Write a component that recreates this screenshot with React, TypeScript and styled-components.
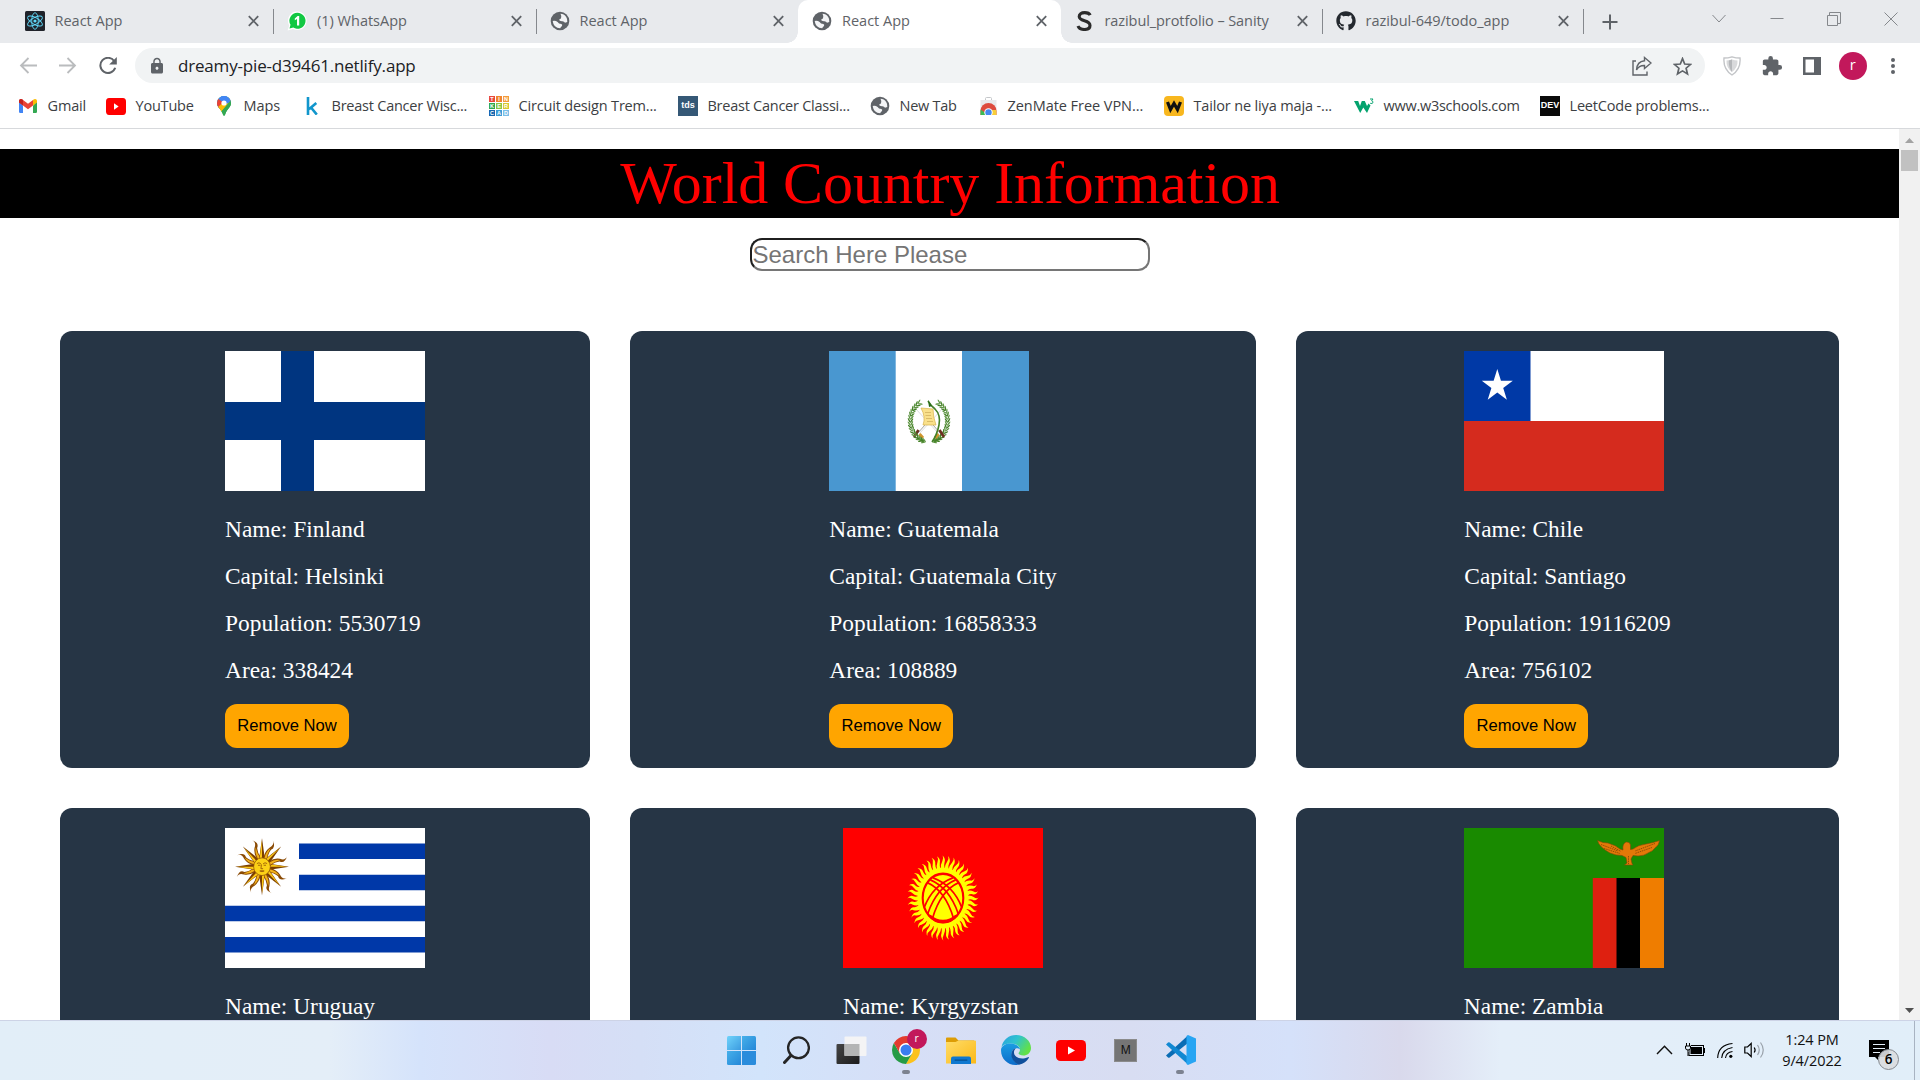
import React from 'react';
import styled, { createGlobalStyle } from 'styled-components';
import { FaGithub } from 'react-icons/fa';
import { MdExtension, MdLock } from 'react-icons/md';

const UI = '"Open Sans", "Noto Sans", sans-serif';
const SERIF = '"Liberation Serif", "Times New Roman", serif';
const SANS = '"Liberation Sans", Arial, sans-serif';

const GlobalStyle = createGlobalStyle`
  * { box-sizing: border-box; }
  body { margin: 0; background: #fff; overflow: hidden; }
  svg { display: block; flex: none; }
`;

const Screen = styled.div`
  width: 1920px;
  height: 1080px;
  display: flex;
  flex-direction: column;
  overflow: hidden;
  background: #fff;
`;

/* ---------- tab strip ---------- */

const TabStrip = styled.div`
  height: 43px;
  display: flex;
  background: #e8eaed;
  padding-left: 10.5px;
`;

const Tab = styled.div<{ $active?: boolean; $line?: boolean; $w?: number }>`
  position: relative;
  width: ${p => p.$w ?? 262.5}px;
  height: 43px;
  padding: 0 14px 2px 14px;
  display: flex;
  align-items: center;
  gap: 10px;
  color: #5f6368;
  background: ${p => (p.$active ? '#fff' : 'transparent')};
  border-radius: 10px 10px 0 0;
  &::after {
    content: '';
    position: absolute;
    right: -1px;
    top: 9px;
    width: 1px;
    height: 25px;
    background: ${p => (p.$line ? '#85888d' : 'transparent')};
  }
`;

const TabCurve = styled.div<{ $side: 'left' | 'right' }>`
  position: absolute;
  bottom: 0;
  ${p => p.$side}: -11px;
  width: 11px;
  height: 11px;
  background: radial-gradient(circle at ${p => (p.$side === 'left' ? '0 0' : '100% 0')}, transparent 10.5px, #fff 11px);
`;

const TabIcon = styled.div`
  width: 20px;
  height: 22px;
  display: flex;
  align-items: center;
  justify-content: center;
`;

const TabTitle = styled.span<{ $ls?: number }>`
  flex: 1;
  white-space: nowrap;
  font: 14.5px/20px ${UI};
  letter-spacing: ${p => p.$ls ?? 0}px;
`;

const NewTab = styled.div`
  width: 54px;
  display: flex;
  align-items: center;
  justify-content: center;
`;

const WindowButtons = styled.div`
  margin-left: auto;
  display: flex;
  height: 37px;
  align-items: center;
`;

const WindowButton = styled.div`
  width: 57.3px;
  display: flex;
  justify-content: center;
`;

/* ---------- toolbar ---------- */

const Toolbar = styled.div`
  height: 45px;
  padding: 5px 0 5px 15px;
  display: flex;
  align-items: center;
  background: #fff;
`;

const NavButton = styled.div`
  width: 40px;
  height: 35px;
  display: flex;
  align-items: center;
  justify-content: flex-start;
  padding-left: 4px;
`;

const Omnibox = styled.div`
  width: 1570px;
  flex: none;
  height: 35px;
  border-radius: 18px;
  background: #f1f3f4;
  display: flex;
  align-items: center;
  padding: 1px 13px 0 13px;
`;

const Url = styled.span`
  flex: 1;
  margin-left: 12px;
  font: 17px/24px ${UI};
  letter-spacing: -0.18px;
  color: #202124;
`;

const OmniAction = styled.div`
  width: 40px;
  display: flex;
  justify-content: flex-end;
`;

const Extensions = styled.div`
  display: flex;
  margin-left: 7px;
  align-items: center;
`;

const Extension = styled.div`
  width: 40.2px;
  display: flex;
  justify-content: center;
`;

const Avatar = styled.div<{ $size: number }>`
  width: ${p => p.$size}px;
  height: ${p => p.$size}px;
  border-radius: 50%;
  background: #c2185b;
  color: #fff;
  font: ${p => p.$size / 1.9}px/1 ${UI};
  display: flex;
  align-items: center;
  justify-content: center;
  padding-bottom: 2px;
`;

/* ---------- bookmarks ---------- */

const Bookmarks = styled.div`
  height: 41px;
  padding: 0 0 4px 18px;
  display: flex;
  align-items: center;
  border-bottom: 1px solid #d7d9dc;
`;

const Bookmark = styled.div<{ $w: number; $ls: number }>`
  width: ${p => p.$w}px;
  display: flex;
  align-items: center;
  gap: 9.5px;
  font: 14.5px/20px ${UI};
  letter-spacing: ${p => p.$ls - 0.05}px;
  color: #3c4043;
  white-space: nowrap;
`;

const BookmarkIcon = styled.div`
  width: 20px;
  height: 20px;
  flex: none;
  display: flex;
  align-items: center;
  justify-content: center;
`;

const TinyTile = styled.div<{ $bg: string; $size: number }>`
  width: 20px;
  height: 20px;
  background: ${p => p.$bg};
  color: #fff;
  font: bold ${p => p.$size}px/19px ${SANS};
  letter-spacing: 0;
  text-align: center;
`;

const TileGrid = styled.div`
  width: 20px;
  height: 20px;
  display: grid;
  grid-template-columns: repeat(3, 6px);
  grid-auto-rows: 6px;
  gap: 1px;
`;

const TileCell = styled.span<{ $bg: string }>`
  background: ${p => p.$bg};
  color: #fff;
  font: bold 5.5px/6px ${SANS};
  letter-spacing: 0;
  text-align: center;
`;

/* ---------- page ---------- */

const Viewport = styled.div`
  height: 891px;
  display: flex;
  overflow: hidden;
`;

const Page = styled.main`
  width: 1899px;
  padding-top: 20px;
`;

const Banner = styled.h1`
  margin: 0;
  height: 69px;
  padding-left: 1px;
  background: #000;
  color: #f00;
  font: 400 60px/69px ${SERIF};
  letter-spacing: -0.08px;
  text-align: center;
`;

const SearchRow = styled.div`
  display: flex;
  justify-content: center;
  padding: 20px 0 60px;
`;

const SearchInput = styled.input`
  width: 400px;
  height: 33px;
  padding: 0 1px;
  border: 2px solid;
  border-color: #1f1f1f #767676 #767676 #1f1f1f;
  border-radius: 12px;
  background: #fff;
  font: 24px ${SANS};
  outline: none;
  &::placeholder { color: #757575; opacity: 1; }
`;

const CardGrid = styled.div`
  display: grid;
  grid-template-columns: 530px 626px 543px;
  gap: 40px;
  padding-left: 60px;
`;

const Card = styled.article`
  height: 437px;
  padding: 20px;
  display: flex;
  justify-content: center;
  border-radius: 12px;
  background: #263545;
`;

const CardBody = styled.div`
  min-width: 200px;
`;

const CardLine = styled.p`
  margin: 0 0 20px;
  font: 23.4px/27px ${SERIF};
  color: #fff;
`;

const Flag = styled.svg`
  width: 200px;
  height: 140px;
  margin-bottom: 25px;
`;

const RemoveButton = styled.button`
  display: block;
  height: 44px;
  width: 124px;
  padding: 0;
  border: 0;
  border-radius: 12px;
  background: orange;
  color: #000;
  font: 16.6px ${SANS};
`;

const Scrollbar = styled.div`
  width: 21px;
  display: flex;
  flex-direction: column;
  align-items: center;
  background: #f1f1f1;
  padding: 9px 0 7px;
`;

const Thumb = styled.div`
  width: 17px;
  height: 21px;
  margin: 7px 0 auto;
  background: #c1c1c1;
`;

/* ---------- taskbar ---------- */

const Taskbar = styled.footer`
  height: 60px;
  display: flex;
  border-top: 1px solid #cdd3e6;
  background: linear-gradient(90deg, #e2eef8 0, #e4eef8 330px, #d5e3fb 420px, #d8dcf5 550px, #d5dff6 640px, #d2e4fb 760px, #d6dff7 900px, #d8ddf2 1130px, #d5e1fa 1290px, #d9d9ec 1400px, #e4eef9 1500px, #e1eef9 1920px);
`;

const Apps = styled.div`
  margin-left: 714px;
  display: flex;
`;

const TaskButton = styled.div<{ $open?: boolean }>`
  position: relative;
  width: 54.9px;
  height: 58px;
  display: flex;
  align-items: center;
  justify-content: center;
  &::after {
    content: '';
    position: absolute;
    left: 23px;
    top: 49px;
    width: 8px;
    height: 4px;
    border-radius: 2px;
    background: ${p => (p.$open ? '#7c8290' : 'transparent')};
  }
`;

const AppBadge = styled.div`
  position: absolute;
  left: 28px;
  top: 8px;
`;

const MTile = styled.div`
  width: 23px;
  height: 23px;
  background: #757575;
  border: 1px solid #8b8b8b;
  color: #111;
  font: 12px/21px ${SANS};
  text-align: center;
`;

const Tray = styled.div`
  margin-left: auto;
  padding: 0 5px 1px 0;
  display: flex;
  align-items: center;
`;

const TrayIcon = styled.div<{ $w: number }>`
  width: ${p => p.$w}px;
  display: flex;
  justify-content: center;
`;

const Clock = styled.div`
  width: 88px;
  margin-right: 2px;
  font: 14.5px/21.5px ${UI};
  color: #111;
  text-align: center;
  letter-spacing: -0.1px;
`;

const Notice = styled.div`
  position: relative;
  width: 57px;
  display: flex;
  justify-content: flex-start;
  padding-left: 11px;
  height: 59px;
  align-items: center;
  border-right: 1px solid #a8b3c2;
`;

const NoticeCount = styled.span`
  position: absolute;
  left: 20px;
  top: 28px;
  width: 21px;
  height: 21px;
  border: 1px solid #85898f;
  border-radius: 50%;
  background: rgba(218, 220, 224, 0.92);
  font: 600 13.5px/18px ${UI};
  text-align: center;
`;

/* ---------- icons ---------- */

const Globe = () => (
  <svg width="20" height="22" viewBox="0 0 20 22">
    <circle cx="10" cy="11" r="9.3" fill="#5f6368" />
    <path d="M10.5 3.800Q14 3.800 16.200 7Q17.600 9.200 17.300 12L15 12.800Q14 11 12 11.300Q9.200 11.300 9.300 9.600Q9.600 8.600 11 8.400Q12 6.500 10.500 3.800z" fill="#f3f4f6" />
    <path d="M2.700 11Q5.500 10.400 7.600 12Q8.600 14 11.300 14Q12.800 14.300 12 16Q10.800 17 10.200 18.300Q3.600 18.200 2.700 11z" fill="#f3f4f6" />
  </svg>
);

const Close = () => (
  <svg width="11" height="12" viewBox="0 0 11 12"><path d="M.8 1.2l9.400 9.600M10.200 1.200L.8 10.800" stroke="#5f6368" strokeWidth="1.8" /></svg>
);

const ReactMark = () => (
  <svg width="20" height="20" viewBox="-10 -10 20 20">
    <rect x="-10" y="-10" width="20" height="20" rx="1.5" fill="#20232a" />
    {[0, 60, 120].map(a => <ellipse key={a} rx="8.3" ry="3.3" fill="none" stroke="#61dafb" strokeWidth=".9" transform={`rotate(${a + 30})`} />)}
    <circle r="1.6" fill="#61dafb" />
  </svg>
);

const WhatsMark = () => (
  <svg width="20" height="20" viewBox="0 0 20 20">
    <path d="M10.5.6a9.2 9.2 0 1 1-4.4 17.3L.6 19.4l1.6-5A9.2 9.2 0 0 1 10.5.6z" fill="#fff" />
    <path d="M10.5 1.8a8 8 0 1 1-4.2 14.8L2.5 17.6l1-3.8a8 8 0 0 1 7-12z" fill="#12c843" />
    <path d="M7.8 7.4L10.6 5h1.6v9.4H10V8L7.8 9.3z" fill="#fff" />
  </svg>
);

const SanityMark = () => (
  <svg width="17" height="20" viewBox="0 0 17 20">
    <path d="M14.2 4.2C13.4 2.5 11.500 1.600 8.700 1.600C5.300 1.600 3.200 3.300 3.200 5.600C3.200 8 5.400 8.900 8.500 9.800C12 10.800 14 12 14 14.500C14 16.900 11.800 18.500 8.400 18.500C5 18.500 2.800 17.200 2 15" fill="none" stroke="#2b2b2b" strokeWidth="3.1" />
  </svg>
);

const GmailMark = () => (
  <svg width="18" height="14" viewBox="0 0 18 14">
    <path d="M0 2.500V12.800Q0 14 1.200 14H4V6.500z" fill="#4285f4" />
    <path d="M18 2.500V12.800Q18 14 16.800 14H14V6.500z" fill="#34a853" />
    <path d="M0 2C0 .2 2-.600 3.400.500L9 4.800L14 1V6.500L9 10.300L4 6.500L0 3.500z" fill="#ea4335" />
    <path d="M0 2C0 .2 2-.600 3.400.500L4 1V6.500L0 3.500z" fill="#c5221f" />
    <path d="M14 1L14.600.500C16-.600 18 .2 18 2V3.500L14 6.500z" fill="#fbbc04" />
  </svg>
);

const YouTubeMark = ({ w, h }: { w: number; h: number }) => (
  <svg width={w} height={h} viewBox="0 0 30 21" preserveAspectRatio="none">
    <rect width="30" height="21" rx="4.500" fill="#f00" />
    <path d="M12 6.500L19 10.500L12 14.500z" fill="#fff" />
  </svg>
);

const MapsMark = () => (
  <svg width="14" height="20" viewBox="0 0 14 20">
    <clipPath id="pin"><path d="M7 0a7 7 0 0 1 7 7c0 4-3.500 5.500-5.500 10.500C8 19 7.600 20 7 20s-1-1-1.500-2.500C3.500 12.500 0 11 0 7a7 7 0 0 1 7-7z" /></clipPath>
    <g clipPath="url(#pin)">
      <rect width="14" height="20" fill="#34a853" />
      <path d="M0 0H14V4L7 10L0 14z" fill="#4285f4" />
      <path d="M0 2L7 7L0 14z" fill="#ea4335" />
      <path d="M0 12L12 1L14 5L4 16z" fill="#fbbc04" />
      <path d="M4 0H14L14 6L9 8L4 4z" fill="#4285f4" />
      <path d="M14 4L4 16L8 20H14z" fill="#34a853" />
    </g>
    <circle cx="7" cy="7" r="2.600" fill="#fff" />
  </svg>
);

const KMark = () => (
  <svg width="12" height="18" viewBox="0 0 12 18"><path d="M2 0V18M10.300 6L3 12.200M5 10.500L10.800 17.600" fill="none" stroke="#1196cc" strokeWidth="2.600" /></svg>
);

const StoreMark = () => (
  <svg width="17" height="18" viewBox="0 0 17 18">
    <path d="M5.500 3V1.500Q5.500.500 6.500.500H10.500Q11.500.500 11.500 1.500V3" fill="none" stroke="#c5c7ca" />
    <path d="M.500 3H16.500V18H.500z" fill="#e8e9eb" />
    <path d="M.500 18V14a8 8 0 0 1 16 0V18z" fill="#dd4b3e" />
    <path d="M.500 18V12.500L5.500 16V18z" fill="#3cba54" />
    <path d="M10.500 13H16.300L16.500 18H10z" fill="#f7ce3a" />
    <circle cx="8.500" cy="15.500" r="4.200" fill="#fff" /><circle cx="8.500" cy="15.500" r="3.200" fill="#4688f1" />
  </svg>
);

const WMark = () => (
  <svg width="20" height="20" viewBox="0 0 20 20">
    <rect width="20" height="20" rx="4" fill="#f8b71e" />
    <path d="M3.500 6L6.500 13.500L10 7.500L13.500 13.500L16.500 6" fill="none" stroke="#111" strokeWidth="3.200" />
  </svg>
);

const W3Mark = () => (
  <svg width="20" height="16" viewBox="0 0 20 16">
    <path d="M0 3H4.200L6 8L7.800 3H10.800L13 8L14.500 5.500L16.500 7.500L13 15L9.300 9.500L6.200 15z" fill="#04a36e" />
    <path d="M16 1H19L17.600 2.800Q19.300 3.200 19 4.600Q18.300 6 16.200 5.300" fill="none" stroke="#04a36e" strokeWidth="1" />
  </svg>
);

const ShareIcon = () => (
  <svg width="20" height="20" viewBox="0 0 20 20" fill="none" stroke="#5f6368" strokeWidth="1.400">
    <path d="M4 5H1V19H15V15.500" />
    <path d="M12.500 1.500L19 7L12.500 12.500V9.500Q7 9.300 4.500 14Q5 5.500 12.500 4.800z" />
  </svg>
);

const StarIcon = () => (
  <svg width="19" height="19" viewBox="0 0 19 19"><path d="M9.500 1.600L11.700 7L17.600 7.400L13.100 11.200L14.500 17L9.500 13.900L4.500 17L5.900 11.200L1.400 7.400L7.300 7z" fill="none" stroke="#5f6368" strokeWidth="1.700" /></svg>
);

const ShieldIcon = () => (
  <svg width="18" height="20" viewBox="0 0 18 20">
    <path d="M9 .800Q13 2 17 2Q18 13 9 19Q0 13 1 2Q5 2 9 .800z" fill="#fff" stroke="#c3c5c8" strokeWidth="1.400" />
    <path d="M9 3.500Q12 4.500 14.500 4.500Q15 11.500 9 16Q3 11.500 3.500 4.500Q6 4.500 9 3.500z" fill="#d8d9db" />
    <path d="M9 3.500V16Q5.500 12 5.800 4.600" fill="#b5b7ba" />
  </svg>
);

const WindowsMark = () => (
  <svg width="29" height="29" viewBox="0 0 29 29">
    <linearGradient id="win" x1="0" y1="0" x2="1" y2="1"><stop stopColor="#6fd3fb" /><stop offset="1" stopColor="#3b9be0" /></linearGradient>
    <linearGradient id="win2" x1="0" y1="0" x2="1" y2="1"><stop stopColor="#46b0ea" /><stop offset="1" stopColor="#2487d8" /></linearGradient>
    <path d="M1.500 0H14V14H0V1.500Q0 0 1.500 0z" fill="url(#win)" />
    <path d="M15 0H27.500Q29 0 29 1.500V14H15z" fill="url(#win2)" />
    <path d="M0 15H14V29H1.500Q0 29 0 27.500z" fill="url(#win2)" />
    <path d="M15 15H29V27.500Q29 29 27.500 29H15z" fill="#2a8cdc" />
  </svg>
);

const SearchMark = () => (
  <svg width="27" height="28" viewBox="0 0 27 28" fill="none" stroke="#252525">
    <circle cx="15.500" cy="11.800" r="10.400" strokeWidth="2.300" /><path d="M8 19.500L1.500 26.500" strokeWidth="3" strokeLinecap="round" />
  </svg>
);

const TaskViewMark = () => (
  <svg width="31" height="28" viewBox="0 0 31 28">
    <linearGradient id="tv" x1="0" y1="0" x2="1" y2="1"><stop stopColor="#454545" /><stop offset="1" stopColor="#1c1c1c" /></linearGradient>
    <rect x=".500" y="8" width="23" height="20" rx="1" fill="url(#tv)" />
    <rect x="8.500" y=".500" width="22" height="19.500" rx="1" fill="#f4f4f5" />
    <rect x="8.500" y="8" width="15" height="12" fill="#b4b5b5" />
  </svg>
);

const ChromeMark = () => (
  <svg width="28" height="28" viewBox="-14 -14 28 28">
    <path d="M0-7H12.120A14 14 0 0 1 0 14L6 3.500z" fill="#fcc21b" />
    <path d="M-12.120-7A14 14 0 0 0 0 14L6.060 3.500L0 0L-6.060 3.500z" fill="#259b46" />
    <path d="M-12.120-7A14 14 0 0 1 12.120-7H0L-6.060 3.500z" fill="#e33b2e" />
    <circle r="7" fill="#fff" /><circle r="5.500" fill="#3a7df0" />
  </svg>
);

const FolderMark = () => (
  <svg width="30" height="27" viewBox="0 0 30 27">
    <linearGradient id="fold" x1="0" y1="0" x2="1" y2="1"><stop stopColor="#ffdc68" /><stop offset="1" stopColor="#fbb917" /></linearGradient>
    <path d="M0 1.500Q0 .500 1 .500H9.500L12.500 3.500H28V8H0z" fill="#dd9d05" />
    <path d="M0 5H9.500L12.500 3.500H29Q30 3.500 30 4.500V26.500H0z" fill="url(#fold)" />
    <path d="M5 27V21.500Q5 19.500 7 19.500H23Q25 19.500 25 21.500V27z" fill="#0f78d0" />
    <rect x="8.500" y="22.500" width="13" height="1.200" rx=".600" fill="#064f8e" />
  </svg>
);

const EdgeMark = () => (
  <svg width="30" height="30" viewBox="0 0 30 30">
    <linearGradient id="eg1" x1="0" y1="0" x2="1" y2=".500"><stop stopColor="#2a9fe0" /><stop offset=".5" stopColor="#2fc3cf" /><stop offset="1" stopColor="#62e048" /></linearGradient>
    <linearGradient id="eg2" x1="0" y1="0" x2="0" y2="1"><stop stopColor="#1b9de2" /><stop offset="1" stopColor="#0c6ccb" /></linearGradient>
    <path d="M.500 12C2 4.500 8 0 15 0C23.500 0 30 6 30 13C30 18 26 20.500 22.500 20.500C19.500 20.500 17.500 19.500 17.500 18.300C17.500 17.500 19 17 19 14.500C19 11 14.500 8.500 9.500 8.500C5 8.500 2 10 .500 12z" fill="url(#eg1)" />
    <path d="M.100 14C1 10.500 5 8.500 9.500 8.500C14.500 8.500 18.500 11.200 19 14.500C17 12.500 12.500 12.500 11 16.500C9.500 22 14 28.500 18.500 29.500C8 32 -.800 24 .100 14z" fill="url(#eg2)" />
    <path d="M11.500 15.500C8.500 20 11.500 27.500 18 29.700C22.500 29 26 26 27.800 23C28.200 22.300 27.600 21.800 27 22.200C19.500 25.500 12.500 22 13 17C13.100 15.500 13.800 14.200 15 13.300C13.500 13.500 12.300 14.200 11.500 15.500z" fill="#10509c" />
  </svg>
);

const CodeMark = () => (
  <svg width="30" height="30" viewBox="0 0 30 30">
    <path d="M0 20.500L2 22.500Q2.800 23 3.700 22.400L22 8V.500Z" fill="#0a6cb4" />
    <path d="M0 9.500L2 7.500Q2.800 7 3.700 7.600L22 22V29.500Z" fill="#1188d2" />
    <path d="M22 0L30 3.500V26.500L22 30L20.500 29V1z" fill="#27a5f3" />
  </svg>
);

const ChevronUp = () => <svg width="17" height="10" viewBox="0 0 17 10"><path d="M1 9L8.500 1.200L16 9" fill="none" stroke="#111" strokeWidth="1.400" /></svg>;

const BatteryIcon = () => (
  <svg width="20" height="14" viewBox="0 0 20 14">
    <rect x="4" y="2.500" width="14.500" height="10" fill="none" stroke="#000" /><rect x="5.500" y="4" width="11.500" height="7" /><rect x="18.500" y="5" width="1.500" height="5" />
    <path d="M0 2H6V6H4V9H2V6H0z" fill="#e3eef9" /><path d="M1.500 0V3M4.500 0V3M.500 3H5.500V5Q5.500 7 3 7Q.500 7 .500 5zM3 7V13" fill="none" stroke="#000" />
  </svg>
);

const WifiIcon = () => (
  <svg width="17" height="17" viewBox="0 0 17 17" fill="none" stroke="#000" strokeWidth="1.100">
    <path d="M.700 16Q1 3 15.500 1.500M4.700 16Q5 7.500 15.500 5.500M8.500 16Q9 10.500 15.500 9.500" /><circle cx="13.800" cy="14.300" r="1.600" fill="#000" stroke="none" />
  </svg>
);

const VolumeIcon = () => (
  <svg width="21" height="18" viewBox="0 0 21 18" fill="none" stroke="#000" strokeWidth="1.200">
    <path d="M.800 6H3.500L7.200 2.500V15.500L3.500 12H.800z" /><path d="M10.200 6.500Q12 9 10.200 11.500" />
    <path d="M13.500 4Q17 9 13.500 14M16.500 1.500Q22 9 16.500 16.500" stroke="#9aa2ab" />
  </svg>
);

const NoticeIcon = () => (
  <svg width="20" height="20" viewBox="0 0 20 20">
    <path d="M0 0H20V17H9V20L6 17H0z" fill="#000" /><path d="M4 4.500H16M4 8.500H16M4 12.500H11" stroke="#e3eef9" strokeWidth="1.200" />
  </svg>
);

/* ---------- flags ---------- */

const polar = (r: number, a: number) => `${(r * Math.cos(a)).toFixed(3)} ${(r * Math.sin(a)).toFixed(3)}`;

const Finland = () => (
  <Flag viewBox="0 0 200 140"><path d="M0 0H200V140H0z" fill="#fff" /><path d="M56 0H89V140H56zM0 51H200V89H0z" fill="#003580" /></Flag>
);

const leaves = Array.from({ length: 17 }, (_, i) => -1.08 + i * 0.145);

const Guatemala = () => (
  <Flag viewBox="0 0 200 140">
    <path d="M0 0H200V140H0z" fill="#4997d0" /><path d="M66.700 0H133V140H66.700z" fill="#fff" />
    {[1, -1].map(side => (
      <g key={side} transform={`translate(100 70) scale(${side} 1)`}>
        {leaves.map((a, i) => {
          const x = 18.6 * Math.cos(a);
          const y = 21 * Math.sin(a);
          const deg = (a * 180) / Math.PI + 90;
          return (
            <g key={i} transform={`translate(${x.toFixed(2)} ${y.toFixed(2)}) rotate(${deg.toFixed(1)})`} fill={i % 2 ? '#448127' : '#5c9440'}>
              <ellipse cx="0" cy="1.500" rx="2.600" ry=".700" transform="rotate(-32)" />
              <ellipse cx="0" cy="-1.500" rx="2.600" ry=".700" transform="rotate(32)" />
            </g>
          );
        })}
        <path d="M-14 -13L10 13" stroke="#c5c7c9" strokeWidth=".600" />
        <path d="M-4 4L-12 13" stroke="#999" strokeWidth=".900" />
        <path d="M-10.500 9L-15 16" stroke="#6c3020" strokeWidth="2.600" />
        <path d="M-9.500 13L-6 17" stroke="#d0952e" strokeWidth="3" />
        <path d="M-12 17L-5 20.500" stroke="#448127" strokeWidth="2" />
      </g>
    ))}
    <path d="M92 57L104 58Q104 66 107 74L94 74Q97 66 92 57z" fill="#f9e08b" stroke="#d9b14a" strokeWidth=".700" />
    <path d="M96 61.500H102M96.500 64.500H102M97 67.500H103M98 70.500H104" stroke="#c5a150" strokeWidth=".600" />
    <path d="M99 50Q102 55 106 58Q112 64 110 74Q108 84 103 91" fill="none" stroke="#448127" strokeWidth="1.600" />
    <path d="M99 49L103 55L100 56z" fill="#2b6b1a" />
  </Flag>
);

const Chile = () => {
  const pts = Array.from({ length: 10 }, (_, i) => polar(i % 2 ? 0.382 : 1, -Math.PI / 2 + (i * Math.PI) / 5)).join(' ');
  return (
    <Flag viewBox="0 0 200 140">
      <path d="M0 0H200V140H0z" fill="#fff" /><path d="M0 70H200V140H0z" fill="#d52b1e" /><path d="M0 0H66.500V70H0z" fill="#0039a6" />
      <polygon points={pts} fill="#fff" transform="translate(33.300 35) scale(16.300 17)" />
    </Flag>
  );
};

const Uruguay = () => (
  <Flag viewBox="0 0 200 140">
    <path d="M0 0H200V140H0z" fill="#fff" />
    <path d="M74 15.500H200V31.100H74zM74 46.700H200V62.200H74zM0 77.800H200V93.300H0zM0 108.900H200V124.400H0z" fill="#0038a8" />
    <g transform="translate(37 38.700) scale(27 28.500)">
      {Array.from({ length: 16 }, (_, i) => {
        const a = (i * Math.PI) / 8;
        const wavy = i % 2 === 1;
        return wavy ? (
          <g key={i}>
            <path d={`M${polar(0.3, a - 0.21)} Q${polar(0.55, a - 0.22)} ${polar(0.72, a)} Q${polar(0.88, a + 0.16)} ${polar(1, a + 0.02)} Q${polar(0.84, a + 0.28)} ${polar(0.68, a + 0.12)} Q${polar(0.5, a + 0.05)} ${polar(0.3, a + 0.31)} z`} fill="#8a4a04" />
            <path d={`M${polar(0.3, a - 0.1)} Q${polar(0.55, a - 0.14)} ${polar(0.72, a + 0.06)} Q${polar(0.5, a)} ${polar(0.3, a + 0.2)} z`} fill="#f2b21b" />
          </g>
        ) : (
          <g key={i}>
            <path d={`M${polar(0.3, a - 0.36)} L${polar(1, a)} L${polar(0.3, a + 0.36)} z`} fill="#7b3f00" />
            <path d={`M${polar(0.3, a - 0.3)} L${polar(0.93, a)} L${polar(0.3, a)} z`} fill="#fcc816" />
          </g>
        );
      })}
      <circle r=".310" fill="#fcd116" stroke="#8a4b04" strokeWidth=".025" />
      <path d="M-.190-.110Q-.110-.170-.040-.100M.190-.110Q.110-.170.040-.100M-.150-.050H-.060M.150-.050H.060M-.020-.080L-.040.070H.040M-.080.150Q0 .130.080.150Q0 .200-.080.150" fill="none" stroke="#9a5a08" strokeWidth=".032" />
    </g>
  </Flag>
);

const Kyrgyzstan = () => (
  <Flag viewBox="0 0 200 140">
    <path d="M0 0H200V140H0z" fill="#f00" />
    <g transform="translate(100 70) scale(35.300 42)">
      {Array.from({ length: 40 }, (_, i) => {
        const a = (i * Math.PI) / 20;
        return <path key={i} d={`M${polar(0.7, a - 0.085)} Q${polar(0.8, a - 0.09)} ${polar(0.88, a - 0.02)} Q${polar(0.94, a + 0.03)} ${polar(1.01, a - 0.01)} Q${polar(0.93, a + 0.09)} ${polar(0.84, a + 0.05)} Q${polar(0.78, a + 0.02)} ${polar(0.7, a + 0.07)} z`} fill="#ff0" />;
      })}
      <circle r=".720" fill="#ff0" />
      <circle r=".575" fill="none" stroke="#f00" strokeWidth=".060" />
      <path d="M-.420.430A.600.600 0 0 0 .420.430L.350.400Q.200.520 0 .520Q-.200.520-.350.400z" fill="#f00" />
      <g fill="none" stroke="#f00" strokeWidth=".046">
        {[1, -1].map(s => (
          <g key={s} transform={`scale(${s} 1)`}>
            <path d="M-.280-.480Q.290-.300.530.220" />
            <path d="M-.360-.430Q.180-.240.430.370" />
            <path d="M-.430-.360Q.070-.170.300.490" />
          </g>
        ))}
      </g>
    </g>
  </Flag>
);

const Zambia = () => (
  <Flag viewBox="0 0 200 140">
    <path d="M0 0H200V140H0z" fill="#198a00" />
    <path d="M128.800 50H153V140H128.800z" fill="#de2010" /><path d="M152.500 50H176.500V140H152.500z" fill="#000" /><path d="M176 50H200V140H176z" fill="#ef7d00" />
    <path d="M133.500 12.500L139 14.500L144 15Q151 17 156 21L159 22Q158 16 162 14Q166 13.500 166.500 17L166.500 21.500L169 21Q174 17 182 16L189 14.500L195.500 12.500Q195 17 191 20Q189 23 185 24.500Q180 28 174 28L169 27.500L167 31L168 35.500L169 37H160.500L163 35L162 29.500L158 27.500Q152 27.500 146 25Q135 19 133.500 12.500z" fill="#e37808" stroke="#7b4a06" strokeWidth=".600" />
    <path d="M137 16.500L154 23M140 20.500L156 25.500M147 18L157 23.500M191 15.500L171 23M188 19.500L171 25.500M164.500 28V36" fill="none" stroke="#8a4a04" strokeWidth=".900" strokeDasharray="1.500 .800" />
  </Flag>
);

/* ---------- data ---------- */

const countries = [
  { flag: <Finland />, name: 'Finland', capital: 'Helsinki', population: 5530719, area: 338424 },
  { flag: <Guatemala />, name: 'Guatemala', capital: 'Guatemala City', population: 16858333, area: 108889 },
  { flag: <Chile />, name: 'Chile', capital: 'Santiago', population: 19116209, area: 756102 },
  { flag: <Uruguay />, name: 'Uruguay', capital: 'Montevideo', population: 3473727, area: 181034 },
  { flag: <Kyrgyzstan />, name: 'Kyrgyzstan', capital: 'Bishkek', population: 6591600, area: 199951 },
  { flag: <Zambia />, name: 'Zambia', capital: 'Lusaka', population: 18383956, area: 752612 },
];

const tabs = [
  { icon: <ReactMark />, title: 'React App', line: true },
  { icon: <WhatsMark />, title: '(1) WhatsApp', line: true },
  { icon: <Globe />, title: 'React App' },
  { icon: <Globe />, title: 'React App', active: true },
  { icon: <SanityMark />, title: 'razibul_protfolio – Sanity', ls: -0.08, line: true, w: 261 },
  { icon: <FaGithub size={20} color="#24292f" />, title: 'razibul-649/todo_app', ls: -0.03, line: true, w: 261.5 },
];

const tiles = [['T', '#e8473b'], ['I', '#f0842c'], ['N', '#f39a3a'], ['K', '#2fa84f'], ['E', '#8cc63f'], ['R', '#d9c92e'], ['C', '#1666b0'], ['A', '#3c9bd6'], ['D', '#79bde8']];

const bookmarks = [
  { icon: <GmailMark />, text: 'Gmail', w: 88, ls: -0.1 },
  { icon: <YouTubeMark w={20} h={17} />, text: 'YouTube', w: 108, ls: -0.15 },
  { icon: <MapsMark />, text: 'Maps', w: 88, ls: 0 },
  { icon: <KMark />, text: 'Breast Cancer Wisc...', w: 187, ls: -0.18 },
  { icon: <TileGrid>{tiles.map(([t, c]) => <TileCell key={t} $bg={c}>{t}</TileCell>)}</TileGrid>, text: 'Circuit design Trem...', w: 189, ls: -0.13 },
  { icon: <TinyTile $bg="#355876" $size={9}>tds</TinyTile>, text: 'Breast Cancer Classi...', w: 192, ls: -0.2 },
  { icon: <Globe />, text: 'New Tab', w: 108, ls: -0.2 },
  { icon: <StoreMark />, text: 'ZenMate Free VPN...', w: 186, ls: 0 },
  { icon: <WMark />, text: 'Tailor ne liya maja -...', w: 190, ls: -0.1 },
  { icon: <W3Mark />, text: 'www.w3schools.com', w: 186, ls: -0.22 },
  { icon: <TinyTile $bg="#0a0a0a" $size={9}>DEV</TinyTile>, text: 'LeetCode problems...', w: 180, ls: -0.14 },
];

const dim = { fill: 'none', stroke: '#babcbe', strokeWidth: 1.8 };
const thin = { fill: 'none', stroke: '#85888c', strokeWidth: 1 };

export default function App() {
  return (
    <Screen>
      <GlobalStyle />
      <TabStrip>
        {tabs.map((t, i) => (
          <Tab key={i} $active={t.active} $line={t.line} $w={t.w}>
            {t.active && <><TabCurve $side="left" /><TabCurve $side="right" /></>}
            <TabIcon>{t.icon}</TabIcon>
            <TabTitle $ls={t.ls}>{t.title}</TabTitle>
            <Close />
          </Tab>
        ))}
        <NewTab><svg width="16" height="16" viewBox="0 0 16 16"><path d="M8 .500V15.500M.500 8H15.500" stroke="#5f6368" strokeWidth="2" /></svg></NewTab>
        <WindowButtons>
          <WindowButton><svg width="14" height="9" viewBox="0 0 14 9" {...thin}><path d="M.500 1L7 8L13.500 1" /></svg></WindowButton>
          <WindowButton><svg width="14" height="3" viewBox="0 0 14 3" {...thin}><path d="M.500 1.500H13.500" /></svg></WindowButton>
          <WindowButton><svg width="14" height="14" viewBox="0 0 14 14" {...thin}><path d="M.500 3.500H10.500V13.500H.500zM2.500 3V.500H13.500V11.500H11" /></svg></WindowButton>
          <WindowButton><svg width="14" height="14" viewBox="0 0 14 14" {...thin}><path d="M.500.500L13.500 13.500M13.500.500L.500 13.500" /></svg></WindowButton>
        </WindowButtons>
      </TabStrip>

      <Toolbar>
        <NavButton><svg width="18" height="17" viewBox="0 0 18 17" {...dim}><path d="M18 8.500H2M9.500 1L2 8.500L9.500 16" /></svg></NavButton>
        <NavButton><svg width="18" height="17" viewBox="0 0 18 17" {...dim}><path d="M0 8.500H16M8.500 1L16 8.500L8.500 16" /></svg></NavButton>
        <NavButton>
          <svg width="19" height="18" viewBox="0 0 19 18"><path d="M15.300 4.200A7.600 7.600 0 1 0 16.200 10.800" fill="none" stroke="#5f6368" strokeWidth="2" /><path d="M17.800 0V7.600H10.200z" fill="#5f6368" /></svg>
        </NavButton>
        <Omnibox>
          <MdLock size={18} color="#5f6368" />
          <Url>dreamy-pie-d39461.netlify.app</Url>
          <OmniAction><ShareIcon /></OmniAction>
          <OmniAction><StarIcon /></OmniAction>
        </Omnibox>
        <Extensions>
          <Extension><ShieldIcon /></Extension>
          <Extension><MdExtension size={22} color="#5f6368" /></Extension>
          <Extension><svg width="18" height="18" viewBox="0 0 18 18"><path d="M0 0H18V18H0zM2.500 2.500V15.500H11V2.500z" fill="#5f6368" fillRule="evenodd" /></svg></Extension>
          <Extension><Avatar $size={28}>r</Avatar></Extension>
          <Extension><svg width="4" height="16" viewBox="0 0 4 16" fill="#5f6368"><circle cx="2" cy="2" r="2" /><circle cx="2" cy="8" r="2" /><circle cx="2" cy="14" r="2" /></svg></Extension>
        </Extensions>
      </Toolbar>

      <Bookmarks>
        {bookmarks.map(b => (
          <Bookmark key={b.text} $w={b.w} $ls={b.ls}><BookmarkIcon>{b.icon}</BookmarkIcon>{b.text}</Bookmark>
        ))}
      </Bookmarks>

      <Viewport>
        <Page>
          <Banner>World Country Information</Banner>
          <SearchRow><SearchInput placeholder="Search Here Please" /></SearchRow>
          <CardGrid>
            {countries.map(c => (
              <Card key={c.name}>
                <CardBody>
                  {c.flag}
                  <CardLine>Name: {c.name}</CardLine>
                  <CardLine>Capital: {c.capital}</CardLine>
                  <CardLine>Population: {c.population}</CardLine>
                  <CardLine>Area: {c.area}</CardLine>
                  <RemoveButton>Remove Now</RemoveButton>
                </CardBody>
              </Card>
            ))}
          </CardGrid>
        </Page>
        <Scrollbar>
          <svg width="9" height="5" viewBox="0 0 9 5"><path d="M4.500 0L9 5H0z" fill="#a3a3a3" /></svg>
          <Thumb />
          <svg width="9" height="5" viewBox="0 0 9 5"><path d="M0 0H9L4.500 5z" fill="#505050" /></svg>
        </Scrollbar>
      </Viewport>

      <Taskbar>
        <Apps>
          <TaskButton><WindowsMark /></TaskButton>
          <TaskButton><SearchMark /></TaskButton>
          <TaskButton><TaskViewMark /></TaskButton>
          <TaskButton $open><ChromeMark /><AppBadge><Avatar $size={20}>r</Avatar></AppBadge></TaskButton>
          <TaskButton><FolderMark /></TaskButton>
          <TaskButton><EdgeMark /></TaskButton>
          <TaskButton><YouTubeMark w={30} h={21} /></TaskButton>
          <TaskButton><MTile>M</MTile></TaskButton>
          <TaskButton $open><CodeMark /></TaskButton>
        </Apps>
        <Tray>
          <TrayIcon $w={30}><ChevronUp /></TrayIcon>
          <TrayIcon $w={31}><BatteryIcon /></TrayIcon>
          <TrayIcon $w={30}><WifiIcon /></TrayIcon>
          <TrayIcon $w={28}><VolumeIcon /></TrayIcon>
          <Clock>1:24 PM<br />9/4/2022</Clock>
          <Notice><NoticeIcon /><NoticeCount>6</NoticeCount></Notice>
        </Tray>
      </Taskbar>
    </Screen>
  );
}
